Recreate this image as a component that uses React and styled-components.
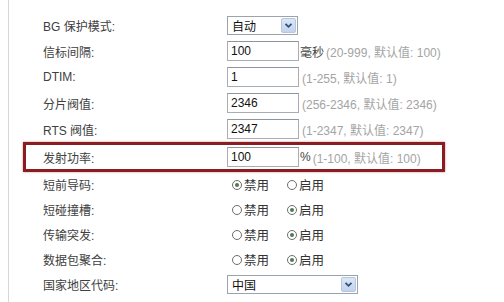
import React from "react";
import styled, { createGlobalStyle } from "styled-components";

const Global = createGlobalStyle`
  html, body {
    margin: 0;
    padding: 0;
    background: #ffffff;
  }
  body {
    font-family: "Liberation Sans", "Noto Sans CJK SC", sans-serif;
    font-size: 12px;
    color: #3c3c3c;
  }
`;

const Page = styled.div`
  width: 504px;
  height: 302px;
  padding-left: 8px;
  box-sizing: border-box;
  overflow: hidden;
`;

const Panel = styled.div`
  height: 100%;
  border-left: 1px solid #d6d6d6;
  padding: 12px 0 0 14px;
  box-sizing: border-box;
`;

const Row = styled.div`
  display: grid;
  grid-template-columns: 184px auto;
  align-items: center;
  width: 422px;
  height: ${(p) => p.$h || 26}px;
  box-sizing: border-box;
  border: ${(p) => (p.$mark ? "3px solid #8a1d22" : "none")};
  padding-left: ${(p) => (p.$mark ? 17 : 20)}px;
  box-shadow: ${(p) => (p.$mark ? "0 0 2px rgba(138,29,34,0.5)" : "none")};
`;

const Label = styled.span`
  white-space: nowrap;
  color: #404040;
`;

const Field = styled.div`
  display: flex;
  align-items: center;
  white-space: nowrap;
`;

const TextBox = styled.input`
  width: 72px;
  height: 20px;
  box-sizing: border-box;
  border: 1px solid #a9aeb4;
  border-top-color: #8f959c;
  padding: 0 3px;
  font: inherit;
  color: #111;
  background: #fff;
  outline: none;
`;

const Unit = styled.span`
  color: #444;
  margin-left: 1px;
`;

const Hint = styled.span`
  color: #a4a4a4;
  margin-left: ${(p) => (p.$tight ? 3 : 2)}px;
`;

const SelectBox = styled.div`
  display: flex;
  align-items: center;
  justify-content: space-between;
  width: ${(p) => p.$w}px;
  height: 19px;
  box-sizing: border-box;
  border: 1px solid #9ba3ad;
  padding: 0 1px 0 4px;
  background: #fff;
  color: #111;
`;

const DropButton = styled.span`
  display: flex;
  align-items: center;
  justify-content: center;
  width: 15px;
  height: 15px;
  background: linear-gradient(#dce6f5, #c3d3ea);
  border: 1px solid #b4c6e0;
  box-sizing: border-box;
  border-radius: 2px;
`;

const RadioGroup = styled.div`
  display: flex;
  align-items: center;
  padding-left: 5px;
`;

const Option = styled.span`
  display: flex;
  align-items: center;
  margin-right: ${(p) => (p.$first ? 18 : 0)}px;
  color: #333;
  font-size: 12.5px;
`;

const Circle = styled.span`
  position: relative;
  width: 10px;
  height: 10px;
  box-sizing: border-box;
  border: 1px solid #6d6d6d;
  border-radius: 50%;
  margin-right: 2px;
  background: #fff;

  &::after {
    content: "";
    display: ${(p) => (p.$on ? "block" : "none")};
    position: absolute;
    left: 2px;
    top: 2px;
    width: 4px;
    height: 4px;
    border-radius: 50%;
    background: #4f7a55;
  }
`;

function Chevron() {
  return (
    <svg width="9" height="7" viewBox="0 0 9 7">
      <path d="M1.5 1.8 L4.5 4.8 L7.5 1.8" fill="none" stroke="#2d4f86" strokeWidth="1.8" />
    </svg>
  );
}

function Select({ value, width }) {
  return (
    <SelectBox $w={width}>
      <span>{value}</span>
      <DropButton>
        <Chevron />
      </DropButton>
    </SelectBox>
  );
}

function Radios({ on }) {
  return (
    <RadioGroup>
      <Option $first>
        <Circle $on={on === 0} />
        禁用
      </Option>
      <Option>
        <Circle $on={on === 1} />
        启用
      </Option>
    </RadioGroup>
  );
}

const numberRows = [
  { label: "信标间隔:", value: "100", unit: "毫秒", hint: "(20-999, 默认值: 100)" },
  { label: "DTIM:", value: "1", hint: "(1-255, 默认值: 1)" },
  { label: "分片阀值:", value: "2346", hint: "(256-2346, 默认值: 2346)" },
  { label: "RTS 阀值:", value: "2347", hint: "(1-2347, 默认值: 2347)" },
];

const radioRows = [
  { label: "短前导码:", on: 0 },
  { label: "短碰撞槽:", on: 1 },
  { label: "传输突发:", on: 1 },
  { label: "数据包聚合:", on: 1 },
];

export default function App() {
  return (
    <Page>
      <Global />
      <Panel>
        <Row>
          <Label>BG 保护模式:</Label>
          <Field>
            <Select value="自动" width={71} />
          </Field>
        </Row>
        {numberRows.map((r) => (
          <Row key={r.label}>
            <Label>{r.label}</Label>
            <Field>
              <TextBox readOnly value={r.value} />
              {r.unit && <Unit>{r.unit}</Unit>}
              <Hint $tight={!r.unit}>{r.hint}</Hint>
            </Field>
          </Row>
        ))}
        <Row $mark $h={30}>
          <Label>发射功率:</Label>
          <Field>
            <TextBox readOnly value="100" />
            <Unit>%</Unit>
            <Hint>(1-100, 默认值: 100)</Hint>
          </Field>
        </Row>
        {radioRows.map((r) => (
          <Row key={r.label} $h={25}>
            <Label>{r.label}</Label>
            <Radios on={r.on} />
          </Row>
        ))}
        <Row $h={24}>
          <Label>国家地区代码:</Label>
          <Field>
            <Select value="中国" width={131} />
          </Field>
        </Row>
      </Panel>
    </Page>
  );
}
